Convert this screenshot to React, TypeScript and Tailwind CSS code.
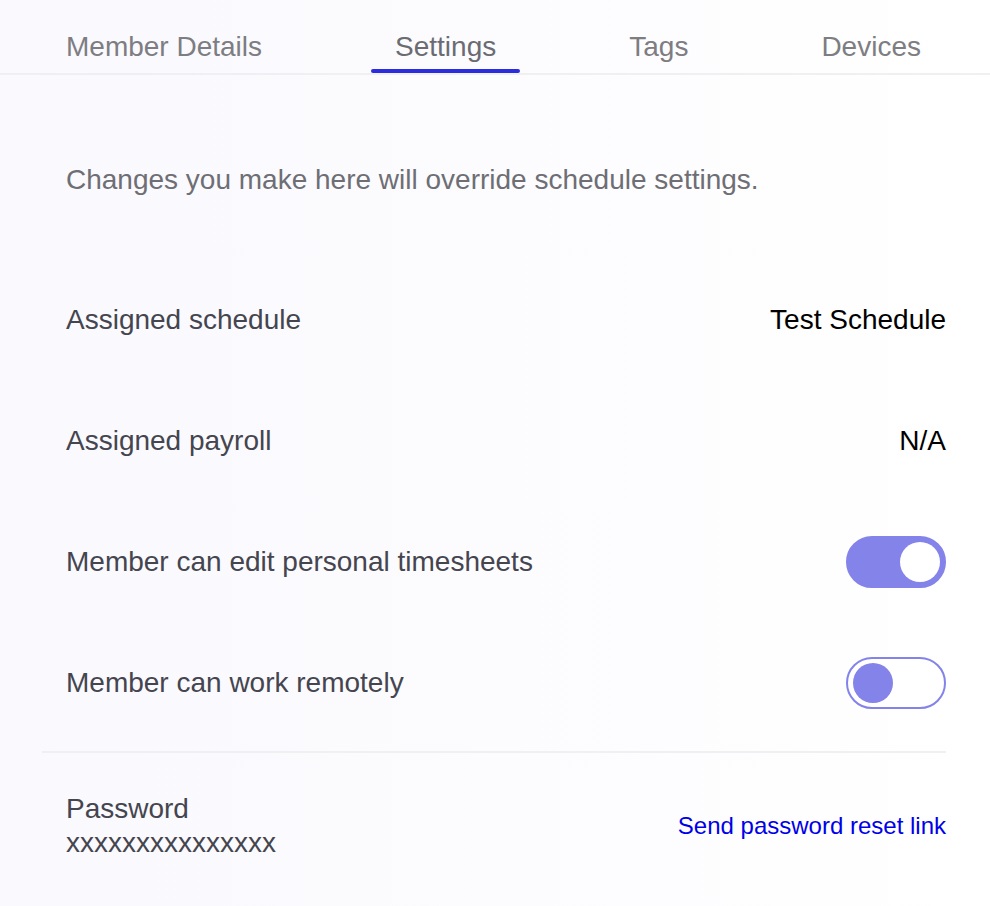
import { useState } from 'react'

const tabs = ['Member Details', 'Settings', 'Tags', 'Devices']

function Toggle({ on, onClick }: { on: boolean; onClick: () => void }) {
  return (
    <button
      onClick={onClick}
      className={
        on
          ? 'relative w-[100px] h-[52px] rounded-full bg-[#8383ea] border-2 border-[#8383ea]'
          : 'relative w-[100px] h-[52px] rounded-full bg-white border-2 border-[#8383ea]'
      }
    >
      <span
        className={
          on
            ? 'absolute top-[4px] right-[4px] w-10 h-10 rounded-full bg-white'
            : 'absolute top-[4px] left-[5px] w-10 h-10 rounded-full bg-[#8383ea]'
        }
      />
    </button>
  )
}

function Row({ label, children }: { label: string; children: React.ReactNode }) {
  return (
    <div className="h-[121px] flex items-center justify-between pl-6">
      <span className="text-[#45454f]">{label}</span>
      {children}
    </div>
  )
}

export default function App() {
  const [edit, setEdit] = useState(true)
  const [remote, setRemote] = useState(false)

  return (
    <div
      className="min-h-[906px] w-full bg-linear-to-r from-[#f9f9fe] to-white text-[28px] leading-10"
      style={{ fontFamily: '"Liberation Sans", Arial, sans-serif' }}
    >
      <div className="flex justify-between pl-[42px] pr-[45px] h-[75px] border-b-2 border-[#f0f0f3]">
        {tabs.map((t) => (
          <div key={t} className="relative px-6 pt-[27px]">
            <span className={t === 'Settings' ? 'text-[#6b6b72]' : 'text-[#7d7d82]'}>{t}</span>
            {t === 'Settings' && (
              <div className="absolute left-0 right-0 bottom-0 h-[4px] rounded-full bg-[#2b2be0]" />
            )}
          </div>
        ))}
      </div>

      <div className="pl-[42px] pr-[44px]">
        <p className="pl-6 mt-[85px] text-[#6e6e74]">Changes you make here will override schedule settings.</p>

        <div className="mt-[59px]">
          <Row label="Assigned schedule">
            <span className="text-black">Test Schedule</span>
          </Row>
          <Row label="Assigned payroll">
            <span className="text-black">N/A</span>
          </Row>
          <Row label="Member can edit personal timesheets">
            <Toggle on={edit} onClick={() => setEdit(!edit)} />
          </Row>
          <Row label="Member can work remotely">
            <Toggle on={remote} onClick={() => setRemote(!remote)} />
          </Row>
        </div>

        <div className="mt-[8px] border-t-2 border-[#f0f0f3]" />

        <div className="flex items-center justify-between pl-6 pt-[39px]">
          <div className="flex flex-col text-[#45454f]">
            <span className="leading-[34px]">Password</span>
            <span className="leading-[34px]">xxxxxxxxxxxxxxx</span>
          </div>
          <a className="text-[#0000e8] text-[24px] cursor-pointer">Send password reset link</a>
        </div>
      </div>
    </div>
  )
}
